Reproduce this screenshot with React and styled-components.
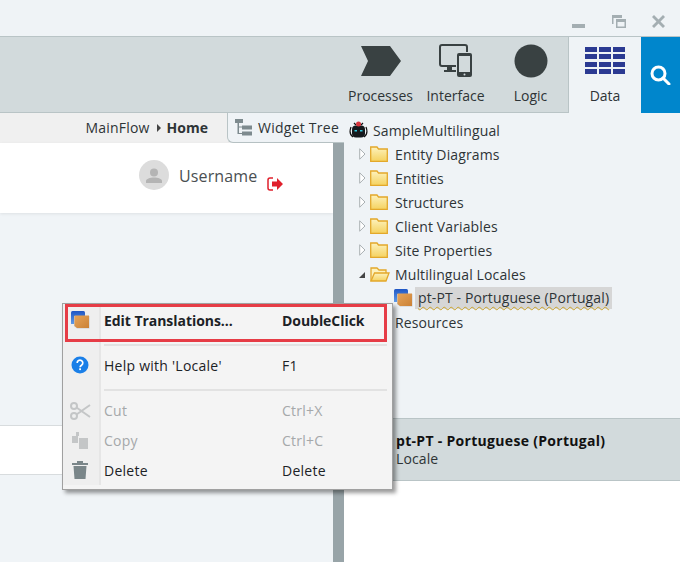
import styled, { createGlobalStyle } from "styled-components";

const GlobalStyle = createGlobalStyle`
    html, body {
        margin: 0;
        padding: 0;
        background: #eff3f6;
    }
    * {
        box-sizing: border-box;
    }
`

const Page = styled.div`
    width: 680px;
    height: 562px;
    position: relative;
    overflow: hidden;
    display: flex;
    flex-direction: column;
    font-family: "Open Sans", "Liberation Sans", sans-serif;
    font-size: 14px;
    letter-spacing: 0.12px;
    color: #2e3436;
    background: #eff3f6;
`

const TitleBar = styled.div`
    height: 37px;
    flex: none;
    display: flex;
    justify-content: flex-end;
    align-items: flex-start;
    padding: 14px 14px 0 0;
    gap: 25px;
    border-bottom: 1px solid #b9c4c6;
`

const WindowButton = styled.svg`
    width: 15px;
    height: 15px;
    display: block;
    fill: #a4aeb2;
`

const Toolbar = styled.div`
    height: 76px;
    flex: none;
    display: flex;
    justify-content: flex-end;
    background: #d2dadc;
    border-bottom: 1px solid #b9c4c6;
    letter-spacing: 0;
`

const ToolItem = styled.div`
    width: ${(p) => (p.$active ? "73px" : "75px")};
    padding-top: 7px;
    display: flex;
    flex-direction: column;
    align-items: center;
    background: ${(p) => (p.$active ? "#eff3f6" : "transparent")};
    border-left: ${(p) => (p.$active ? "1px solid #b9c4c6" : "none")};
    margin-bottom: ${(p) => (p.$active ? "-1px" : "0")};
    & svg {
        display: block;
        width: 44px;
        height: 34px;
    }
    & span {
        margin-top: 8px;
        line-height: 20px;
    }
`

const SearchButton = styled.div`
    width: 39px;
    display: flex;
    align-items: center;
    justify-content: center;
    background: #0086cc;
    margin-bottom: -1px;
`

const Body = styled.div`
    flex: 1;
    min-height: 0;
    display: flex;
`

const LeftColumn = styled.div`
    width: 344px;
    flex: none;
    display: flex;
    flex-direction: column;
`

const TabRow = styled.div`
    height: 30px;
    flex: none;
    display: flex;
    background: #f0f0f0;
`

const Breadcrumb = styled.div`
    flex: 1;
    display: flex;
    align-items: center;
    justify-content: flex-end;
    padding: 0 19px 1px 0;
    gap: 7px;
    letter-spacing: 0.2px;
    & b {
        font-weight: 700;
        margin-left: -1px;
        letter-spacing: 0;
    }
`

const BreadArrow = styled.i`
    width: 0;
    height: 0;
    border-left: 4px solid #444;
    border-top: 4px solid transparent;
    border-bottom: 4px solid transparent;
`

const TreeTab = styled.div`
    width: 117px;
    display: flex;
    align-items: center;
    gap: 6px;
    padding: 0 0 1px 7px;
    background: #eff3f6;
    border-left: 1px solid #b9c4c6;
    border-bottom: 1px solid #b9c4c6;
    border-bottom-left-radius: 6px;
    white-space: nowrap;
    letter-spacing: 0.25px;
`

const Canvas = styled.div`
    flex: 1;
    min-height: 0;
    display: flex;
`

const CanvasMain = styled.div`
    width: 333px;
    flex: none;
    display: flex;
    flex-direction: column;
    background: #f0f4f7;
`

const Splitter = styled.div`
    flex: 1;
    background: #98a4a8;
`

const PageHeader = styled.div`
    height: 70px;
    flex: none;
    background: #fff;
    box-shadow: 0 1px 3px rgba(0, 0, 0, 0.08);
    display: flex;
    align-items: flex-start;
    padding: 17px 0 0 139px;
`

const Avatar = styled.div`
    width: 30px;
    height: 30px;
    border-radius: 50%;
    background: #dcdcdc;
    display: flex;
    align-items: center;
    justify-content: center;
`

const Username = styled.span`
    margin-left: 10px;
    font-size: 16px;
    line-height: 32px;
    color: #4a4f52;
`

const LogoutIcon = styled.svg`
    width: 17px;
    height: 14px;
    margin: 17px 0 0 10px;
`

const ContentBand = styled.div`
    height: 50px;
    margin-top: 212px;
    flex: none;
    background: #fff;
    border-top: 1px solid #d8dcde;
    border-bottom: 1px solid #d8dcde;
`

const RightColumn = styled.div`
    flex: 1;
    display: flex;
    flex-direction: column;
`

const Tree = styled.div`
    height: 305px;
    flex: none;
    padding-top: 5px;
`

const TreeRow = styled.div`
    height: 24px;
    display: flex;
    align-items: center;
    padding-left: ${(p) => p.$indent}px;
    white-space: nowrap;
`

const Expander = styled.i`
    width: 12px;
    flex: none;
    display: flex;
    justify-content: center;
    margin-right: 2px;
`

const Arrow = styled.svg`
    width: 7px;
    height: 12px;
    display: block;
`

const TreeLabel = styled.span`
    margin-left: ${(p) => p.$gap || 7}px;
`

const SelectedLabel = styled.span`
    margin-left: 2px;
    padding: 0 3px;
    line-height: 22px;
    background: #d6d6d6;
    text-decoration: underline wavy #c9a227 1px;
    text-underline-offset: 3px;
`

const PropsHeader = styled.div`
    height: 63px;
    flex: none;
    padding: 13px 0 0 52px;
    background: #d2dadc;
    border-top: 1px solid #b9c4c6;
    border-bottom: 1px solid #b9c4c6;
    line-height: 18px;
    & b {
        display: block;
        color: #111;
        letter-spacing: 0.3px;
    }
`

const PropsBody = styled.div`
    flex: 1;
    background: #fff;
`

const Menu = styled.div`
    position: absolute;
    left: 62px;
    top: 303px;
    width: 331px;
    height: 187px;
    padding: 0 5px 4px 2px;
    background: #f4f4f4;
    border: 1px solid #a0a0a0;
    box-shadow: 3px 3px 4px rgba(0, 0, 0, 0.4);
    color: #1c2226;
    letter-spacing: 0.25px;
`

const Gutter = styled.div`
    position: absolute;
    left: 0;
    top: 0;
    bottom: 4px;
    width: 38px;
    background: #efefef;
    border-right: 2px solid #e6e6e6;
`

const MenuRow = styled.div`
    position: relative;
    height: ${(p) => p.$h}px;
    padding-bottom: ${(p) => p.$pb || 0}px;
    display: grid;
    grid-template-columns: 39px 178px 1fr;
    align-items: center;
    font-weight: ${(p) => (p.$bold ? 700 : 400)};
    color: ${(p) => (p.$off ? "#a5a8aa" : "inherit")};
`

const HighlightRow = styled(MenuRow)`
    outline: 3px solid #e63c46;
    outline-offset: -3px;
    letter-spacing: -0.05px;
`

const MenuIcon = styled.div`
    display: flex;
    justify-content: center;
    padding-right: 9px;
    & svg {
        display: block;
    }
`

const MenuLine = styled.div`
    position: relative;
    height: 2px;
    margin: ${(p) => p.$top || 0}px 0 0 39px;
    background: #e2e2e2;
`

const MenuSpacer = styled.div`
    height: 5px;
`

function LocaleIcon() {
    return (
        <svg width="20" height="20" viewBox="0 0 20 20">
            <defs>
                <linearGradient id="localeBack" x1="0" y1="0" x2="0" y2="1">
                    <stop offset="0" stopColor="#1f56c4" />
                    <stop offset="1" stopColor="#5f9be8" />
                </linearGradient>
                <linearGradient id="localeFront" x1="0" y1="0" x2="1" y2="1">
                    <stop offset="0" stopColor="#e6a45a" />
                    <stop offset="1" stopColor="#cb8236" />
                </linearGradient>
            </defs>
            <path d="M1 2.500Q1 1 2.500 1H13.500Q15 1 15 2.500V14H1z" fill="url(#localeBack)" />
            <path d="M4 6h15.500v12.500H7L4 16z" fill="#c9cccf" />
            <path d="M4.500 5.500H19V18H7l-2.500-2z" fill="url(#localeFront)" />
        </svg>
    );
}

function Folder({ open }) {
    return (
        <svg width={open ? 20 : 18} height="16" viewBox={open ? "0 0 20 16" : "0 0 18 16"} style={{ marginRight: open ? -2 : 0 }}>
            <defs>
                <linearGradient id="folderFill" x1="0" y1="0" x2="0" y2="1">
                    <stop offset="0" stopColor="#fdf2bd" />
                    <stop offset="1" stopColor="#f5d25f" />
                </linearGradient>
            </defs>
            {open ? (
                <>
                    <path d="M1 15V2h6l2 2h7v3" fill="#fdf2bd" stroke="#e3a82a" strokeWidth="1.300" />
                    <path d="M1 15l3.500-8H19l-3 8z" fill="url(#folderFill)" stroke="#e3a82a" strokeWidth="1.300" />
                </>
            ) : (
                <path d="M.7 15.300V1h6.300l1.500 2h8.800v12.300z" fill="url(#folderFill)" stroke="#e3a82a" strokeWidth="1.300" />
            )}
        </svg>
    );
}

function RobotIcon() {
    return (
        <svg width="19" height="18" viewBox="0 0 19 18">
            <path d="M2 6C.5 10 1 14 4 16M17 6c1.500 4 1 8-2 10M5 2l2 2M14 2l-2 2" fill="none" stroke="#111" strokeWidth="1.200" />
            <rect x="3" y="4.500" width="13" height="12" rx="4" fill="#15191c" />
            <circle cx="9.500" cy="3" r="2.500" fill="#d8343c" />
            <rect x="5.500" y="9" width="2.500" height="1.500" fill="#33c8dc" />
            <rect x="11" y="9" width="2.500" height="1.500" fill="#33c8dc" />
        </svg>
    );
}

function TreeItem({ open, children }) {
    return (
        <TreeRow $indent={12}>
            <Expander>
                <Arrow viewBox="0 0 7 12">
                    {open
                        ? <path d="M0 10L6 4v6z" fill="#444" />
                        : <path d="M.7 .8L6 6 .7 11.200z" fill="#fff" stroke="#aab0b3" />}
                </Arrow>
            </Expander>
            <Folder open={open} />
            <TreeLabel>{children}</TreeLabel>
        </TreeRow>
    );
}

function App() {
    return (
        <Page>
            <GlobalStyle />
            <TitleBar>
                <WindowButton viewBox="0 0 15 15">
                    <rect x="1" y="10" width="13" height="4" />
                </WindowButton>
                <WindowButton viewBox="0 0 15 15">
                    <path d="M1 1h10v3H1zM1 4h1.500v6H1zM5 5h10v9H5zM6.500 8v4.500h7V8z" fillRule="evenodd" />
                </WindowButton>
                <WindowButton viewBox="0 0 15 15">
                    <path d="M3 1l4.500 4.500L12 1l2 2-4.500 4.500L14 12l-2 2-4.500-4.500L3 14l-2-2 4.500-4.500L1 3z" />
                </WindowButton>
            </TitleBar>
            <Toolbar>
                <ToolItem>
                    <svg viewBox="0 0 44 34">
                        <path d="M2 2h29l11 15-11 15H2l7-15z" fill="#394142" />
                    </svg>
                    <span>Processes</span>
                </ToolItem>
                <ToolItem>
                    <svg viewBox="0 0 44 34">
                        <path d="M22 22H8a2 2 0 0 1-2-2V3a2 2 0 0 1 2-2h23a2 2 0 0 1 2 2v5" fill="none" stroke="#394142" strokeWidth="2" />
                        <path d="M13 22h5v4h4v2H10v-2h3z" fill="#394142" />
                        <rect x="23" y="9" width="15" height="24" rx="2" fill="#394142" />
                        <rect x="25" y="12" width="11" height="16" fill="#d2dadc" />
                        <circle cx="30.500" cy="30.500" r="1" fill="#d2dadc" />
                    </svg>
                    <span>Interface</span>
                </ToolItem>
                <ToolItem>
                    <svg viewBox="0 0 44 34">
                        <circle cx="22" cy="17" r="16.500" fill="#394142" />
                    </svg>
                    <span>Logic</span>
                </ToolItem>
                <ToolItem $active>
                    <svg viewBox="0 0 44 34">
                        <path
                            d="M2 3h12v5H2zM16 3h12v5H16zM30 3h12v5H30zM2 10h12v5H2zM16 10h12v5H16zM30 10h12v5H30zM2 18h12v5H2zM16 18h12v5H16zM30 18h12v5H30zM2 25h12v5H2zM16 25h12v5H16zM30 25h12v5H30z"
                            fill="#2b3a92"
                        />
                    </svg>
                    <span>Data</span>
                </ToolItem>
                <SearchButton>
                    <svg width="21" height="20" viewBox="0 0 21 20" fill="none" stroke="#fff" strokeWidth="3">
                        <circle cx="8.500" cy="8.500" r="6.500" />
                        <path d="M13 13l6 6" strokeLinecap="round" />
                    </svg>
                </SearchButton>
            </Toolbar>
            <Body>
                <LeftColumn>
                    <TabRow>
                        <Breadcrumb>
                            <span>MainFlow</span>
                            <BreadArrow />
                            <b>Home</b>
                        </Breadcrumb>
                        <TreeTab>
                            <svg width="17" height="17" viewBox="0 0 17 17" fill="#7d8a8e">
                                <path d="M0 0h8v4H0zM7 6.500h10v4H7zM7 12.500h10v4H7zM2.500 4h1.500v10H7v1H2.500zM4 7.500h3v1H4z" />
                            </svg>
                            <span>Widget Tree</span>
                        </TreeTab>
                    </TabRow>
                    <Canvas>
                        <CanvasMain>
                            <PageHeader>
                                <Avatar>
                                    <svg width="16" height="15" viewBox="0 0 16 15" fill="#b4b4b4">
                                        <circle cx="8" cy="4.500" r="4" />
                                        <path d="M0 15v-2c0-2 4-3.500 8-3.500s8 1.500 8 3.500v2z" />
                                    </svg>
                                </Avatar>
                                <Username>Username</Username>
                                <LogoutIcon viewBox="0 0 17 14">
                                    <path d="M6 1H3a2 2 0 0 0-2 2v8a2 2 0 0 0 2 2h3" fill="none" stroke="#e0202c" strokeWidth="1.500" />
                                    <path d="M5 4.500h5V1l6 6-6 6V9.500H5z" fill="#e0202c" />
                                </LogoutIcon>
                            </PageHeader>
                            <ContentBand />
                        </CanvasMain>
                        <Splitter />
                    </Canvas>
                </LeftColumn>
                <RightColumn>
                    <Tree>
                        <TreeRow $indent={5}>
                            <RobotIcon />
                            <TreeLabel $gap={5}>SampleMultilingual</TreeLabel>
                        </TreeRow>
                        <TreeItem>Entity Diagrams</TreeItem>
                        <TreeItem>Entities</TreeItem>
                        <TreeItem>Structures</TreeItem>
                        <TreeItem>Client Variables</TreeItem>
                        <TreeItem>Site Properties</TreeItem>
                        <TreeItem open>Multilingual Locales</TreeItem>
                        <TreeRow $indent={49}>
                            <LocaleIcon />
                            <SelectedLabel>pt-PT - Portuguese (Portugal)</SelectedLabel>
                        </TreeRow>
                        <TreeItem>Resources</TreeItem>
                    </Tree>
                    <PropsHeader>
                        <b>pt-PT - Portuguese (Portugal)</b>
                        <span>Locale</span>
                    </PropsHeader>
                    <PropsBody />
                </RightColumn>
            </Body>
            <Menu>
                <Gutter />
                <HighlightRow $h={38} $pb={6} $bold>
                    <MenuIcon><LocaleIcon /></MenuIcon>
                    <span>Edit Translations...</span>
                    <span>DoubleClick</span>
                </HighlightRow>
                <MenuLine $top={2} />
                <MenuRow $h={43} $pb={5}>
                    <MenuIcon>
                        <svg width="18" height="18" viewBox="0 0 18 18">
                            <circle cx="9" cy="9" r="8.500" fill="#1a7fe8" />
                            <path d="M6.200 7a2.800 2.800 0 1 1 4.300 2.300c-.9.600-1.400 1-1.400 2" fill="none" stroke="#fff" strokeWidth="1.700" />
                            <rect x="8.200" y="12.300" width="1.800" height="1.800" fill="#fff" />
                        </svg>
                    </MenuIcon>
                    <span>Help with 'Locale'</span>
                    <span>F1</span>
                </MenuRow>
                <MenuLine />
                <MenuSpacer />
                <MenuRow $h={29} $off>
                    <MenuIcon>
                        <svg width="21" height="18" viewBox="0 0 21 18" fill="none" stroke="#c4c6c7" strokeWidth="2">
                            <circle cx="4" cy="4" r="3" />
                            <circle cx="4" cy="14" r="3" />
                            <path d="M6.500 5.500L20 15M6.500 12.500L20 3" />
                        </svg>
                    </MenuIcon>
                    <span>Cut</span>
                    <span>Ctrl+X</span>
                </MenuRow>
                <MenuRow $h={30} $off>
                    <MenuIcon>
                        <svg width="16" height="17" viewBox="0 0 16 17" fill="#c4c6c7">
                            <path d="M4 0h3v4H4zM0 4h6v7H0z" />
                            <path d="M7 6h9v11H7z" />
                        </svg>
                    </MenuIcon>
                    <span>Copy</span>
                    <span>Ctrl+C</span>
                </MenuRow>
                <MenuRow $h={30}>
                    <MenuIcon>
                        <svg width="16" height="18" viewBox="0 0 16 18" fill="#7a8689">
                            <path d="M0 2h16v2H0zM5 0h6v2H5zM1.500 5h13l-1 13h-11z" />
                        </svg>
                    </MenuIcon>
                    <span>Delete</span>
                    <span>Delete</span>
                </MenuRow>
            </Menu>
        </Page>
    );
}

export default App;
